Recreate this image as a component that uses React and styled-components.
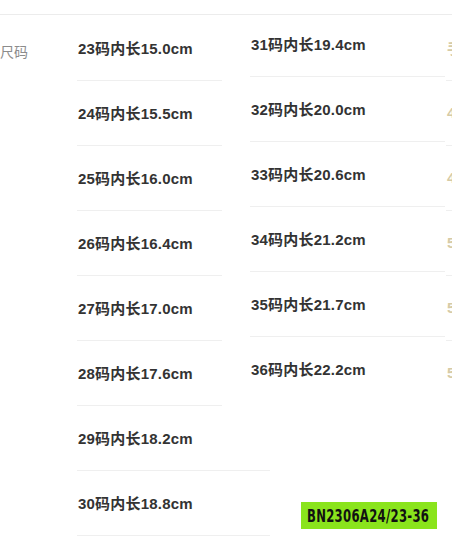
import styled, { createGlobalStyle } from 'styled-components'

const GlobalStyle = createGlobalStyle`
  html, body {
    margin: 0;
    padding: 0;
    background: #fff;
    overflow: hidden;
  }
`

const Page = styled.div`
  position: relative;
  width: 452px;
  height: 545px;
  overflow: hidden;
  background: #fff;
  font-family: "Liberation Sans", "Noto Sans CJK SC", sans-serif;
`

const TopRule = styled.div`
  margin-top: 14px;
  height: 1px;
  background: #ececec;
`

const SkuRow = styled.div`
  display: flex;
  align-items: flex-start;
`

const Label = styled.div`
  flex: 0 0 77px;
  padding-top: 28px;
  font-size: 14px;
  line-height: 16px;
  color: #8c8c8c;
  font-family: "Noto Sans CJK SC", sans-serif;
  white-space: nowrap;
`

const Columns = styled.div`
  display: flex;
  align-items: flex-start;
`

const Column = styled.div`
  display: flex;
  flex-direction: column;
  align-items: flex-start;
  flex: 0 0 auto;
  width: ${p => p.$width}px;
  min-width: 0;
  margin-top: ${p => p.$offset}px;
  margin-right: ${p => p.$gap || 0}px;
`

const Item = styled.div`
  box-sizing: border-box;
  height: 65px;
  width: ${p => (p.$wide ? '193px' : '100%')};
  flex: 0 0 auto;
  display: flex;
  align-items: center;
  padding: 0 0 1px 1px;
  border-bottom: 1px solid ${p => (p.$last ? 'transparent' : '#efefef')};
  font-size: 15px;
  font-weight: 700;
  letter-spacing: 0.2px;
  color: ${p => (p.$faint ? '#d6cba6' : '#333')};
  white-space: nowrap;
  overflow: hidden;
`

const Badge = styled.div`
  position: absolute;
  left: 301px;
  top: 502px;
  width: 136px;
  height: 27px;
  background: #8ae41c;
  display: flex;
  align-items: center;
  overflow: hidden;
`

const BadgeText = styled.span`
  display: inline-block;
  margin-left: 6px;
  font-family: "DejaVu Sans Condensed", "DejaVu Sans", sans-serif;
  font-weight: 700;
  font-size: 18px;
  line-height: 18px;
  color: #111;
  letter-spacing: 0.4px;
  transform: scaleX(0.72);
  transform-origin: left center;
  white-space: nowrap;
`

const left = ['15.0', '15.5', '16.0', '16.4', '17.0', '17.6', '18.2', '18.8']
const right = ['19.4', '20.0', '20.6', '21.2', '21.7', '22.2']
const extra = ['手', '4', '4', '5', '5', '5']

export default function App() {
  return (
    <Page>
      <GlobalStyle />
      <TopRule />
      <SkuRow>
        <Label>尺码</Label>
        <Columns>
          <Column $width={145} $offset={1} $gap={28}>
            {left.map((len, i) => (
              <Item key={len} $wide={i >= 6}>{23 + i}码内长{len}cm</Item>
            ))}
          </Column>
          <Column $width={195} $offset={-3} $gap={1}>
            {right.map((len, i) => (
              <Item key={len} $last={i === right.length - 1}>{31 + i}码内长{len}cm</Item>
            ))}
          </Column>
          <Column $width={120} $offset={1}>
            {extra.map((t, i) => (
              <Item key={i} $faint $last={i === extra.length - 1}>{t}</Item>
            ))}
          </Column>
        </Columns>
      </SkuRow>
      <Badge>
        <BadgeText>BN2306A24/23-36</BadgeText>
      </Badge>
    </Page>
  )
}
